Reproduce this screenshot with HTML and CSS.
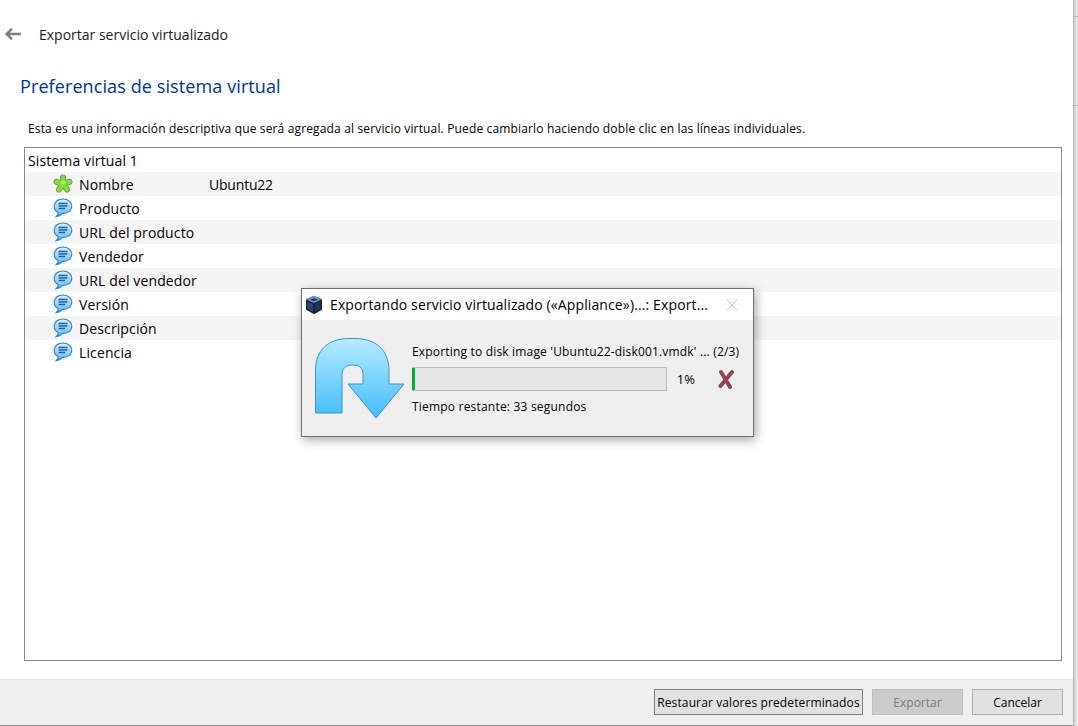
FILE: index.html
```html
<!DOCTYPE html>
<html lang="es">
<head>
  <meta charset="UTF-8">
  <meta name="viewport" content="width=device-width, initial-scale=1.0">
  <link rel="stylesheet" href="styles.css">
  <title>Exportar servicio virtualizado</title>
</head>
<body>
<svg class="defs" width="0" height="0">
  <defs>
    <linearGradient id="bubbleFill" x1="0" y1="0" x2="0" y2="1">
      <stop offset="0" stop-color="#d8f1ff"/>
      <stop offset="1" stop-color="#5db8f2"/>
    </linearGradient>
    <linearGradient id="arrowFill" x1="0" y1="0" x2="0" y2="1">
      <stop offset="0" stop-color="#b5ebff"/>
      <stop offset="1" stop-color="#42bdfb"/>
    </linearGradient>
    <symbol id="bubble" viewBox="0 0 20 20">
      <path d="M10 1C4.900 1 1.200 4 1.200 8.300c0 3 1.800 5.300 4.400 6.500-.2 1.400-1 2.700-2.400 3.900 2.600-.2 4.700-1.400 6.300-3.300h.8c5.100 0 8.500-3 8.500-7.100S15.100 1 10 1z" fill="url(#bubbleFill)" stroke="#2a84d8" stroke-width="1.200"/>
      <path d="M5.500 5.500h9M5.500 8h9M5.500 10.500h6.500" stroke="#1f5fa8" stroke-width="1.400" fill="none"/>
    </symbol>
  </defs>
</svg>

<div class="window">
  <div class="main">
    <!-- Cabecera -->
    <div class="top-bar">
      <svg class="back-icon" width="16" height="12" viewBox="0 0 16 12">
        <path d="M16 6H2M7 .8L1.600 6 7 11.200" fill="none" stroke="#808080" stroke-width="2.600"/>
      </svg>
      <span class="top-title">Exportar servicio virtualizado</span>
    </div>

    <h1 class="page-title">Preferencias de sistema virtual</h1>
    <p class="hint">Esta es una información descriptiva que será agregada al servicio virtual. Puede cambiarlo haciendo doble clic en las líneas individuales.</p>

    <!-- Arbol de propiedades -->
    <div class="tree">
      <div class="tree-root">Sistema virtual 1</div>
      <div class="tree-row alt">
        <svg class="row-icon" width="20" height="20" viewBox="0 0 20 20">
          <path d="M10 10V3.500M10 10l6.500-2.100M10 10l4 5.500M10 10l-4 5.500M10 10L3.500 7.900" stroke="#5aa82c" stroke-width="6" stroke-linecap="round" fill="none"/>
          <path d="M10 10V3.500M10 10l6.500-2.100M10 10l4 5.500M10 10l-4 5.500M10 10L3.500 7.900" stroke="#86d943" stroke-width="4.400" stroke-linecap="round" fill="none"/>
          <circle cx="10" cy="8.500" r="2.200" fill="#aee875"/>
        </svg>
        <span class="row-name">Nombre</span><span class="row-value">Ubuntu22</span>
      </div>
      <div class="tree-row">
        <svg class="row-icon" width="20" height="20"><use href="#bubble"/></svg>
        <span class="row-name">Producto</span>
      </div>
      <div class="tree-row alt">
        <svg class="row-icon" width="20" height="20"><use href="#bubble"/></svg>
        <span class="row-name">URL del producto</span>
      </div>
      <div class="tree-row">
        <svg class="row-icon" width="20" height="20"><use href="#bubble"/></svg>
        <span class="row-name">Vendedor</span>
      </div>
      <div class="tree-row alt">
        <svg class="row-icon" width="20" height="20"><use href="#bubble"/></svg>
        <span class="row-name">URL del vendedor</span>
      </div>
      <div class="tree-row">
        <svg class="row-icon" width="20" height="20"><use href="#bubble"/></svg>
        <span class="row-name">Versión</span>
      </div>
      <div class="tree-row alt">
        <svg class="row-icon" width="20" height="20"><use href="#bubble"/></svg>
        <span class="row-name">Descripción</span>
      </div>
      <div class="tree-row">
        <svg class="row-icon" width="20" height="20"><use href="#bubble"/></svg>
        <span class="row-name">Licencia</span>
      </div>
    </div>

    <!-- Botones -->
    <div class="button-bar">
      <button class="btn btn-wide">Restaurar valores predeterminados</button>
      <button class="btn btn-disabled">Exportar</button>
      <button class="btn">Cancelar</button>
    </div>
  </div>
  <div class="side-strip">
    <div class="strip-seg strip-a"></div>
    <div class="strip-seg strip-b"></div>
    <div class="strip-seg"></div>
  </div>
</div>

<!-- Dialogo de progreso -->
<div class="dialog">
  <div class="dialog-title">
    <svg class="vbox-icon" width="18" height="20" viewBox="0 0 18 20">
      <path d="M9 .8l8 3.400v10.600L9 19.200 1 14.800V4.200z" fill="#16263f"/>
      <path d="M9 .8l8 3.400L9 8 1 4.200z" fill="#6f97c2"/>
      <path d="M9 3.200l3.800 1.400L9 6.300 5.200 4.600z" fill="#1d3353"/>
      <path d="M2.500 6.500L8 9.200v7.600l-5.500-3z" fill="#2a466f"/>
      <path d="M15.500 6.500L10 9.200v7.600l5.500-3z" fill="#1f3557"/>
    </svg>
    <span class="dialog-caption">Exportando servicio virtualizado («Appliance»)...: Export...</span>
    <svg class="dialog-close" width="12" height="12" viewBox="0 0 12 12">
      <path d="M.5.500l11 11M11.500.500l-11 11" stroke="#c4c4c4" stroke-width="1" fill="none"/>
    </svg>
  </div>
  <div class="dialog-body">
    <svg class="uturn-icon" width="90" height="82" viewBox="0 0 90 82">
      <path d="M.5 75V32C.5 12 14 .5 33 .5h8C60 .5 74 12 74 32v14h15L61 80 33 46h15V36c0-6-4-9-10-9-7 0-11 3-11 10v38z" fill="url(#arrowFill)" stroke="#3f8fdc" stroke-width="1"/>
    </svg>
    <div class="progress-info">
      <div class="progress-label">Exporting to disk image 'Ubuntu22-disk001.vmdk' ... (2/3)</div>
      <div class="progress-row">
        <div class="progress-track"><div class="progress-fill" style="width: 1%"></div></div>
        <span class="progress-pct">1%</span>
        <svg class="cancel-icon" width="18" height="20" viewBox="0 0 18 20">
          <path d="M4 3l9 15M15 3L3.500 17" stroke="#6b5a5c" stroke-width="4" stroke-linecap="round" fill="none"/>
          <path d="M4 3l9 15M15 3L3.500 17" stroke="#a83c4c" stroke-width="2.600" stroke-linecap="round" fill="none"/>
        </svg>
      </div>
      <div class="progress-time">Tiempo restante: 33 segundos</div>
    </div>
  </div>
</div>
</body>
</html>
```

FILE: styles.css
```css
body {
  margin: 0;
  width: 1078px;
  height: 726px;
  overflow: hidden;
  background-color: #fff;
  color: #000;
  font-family: "Open Sans", "Noto Sans", sans-serif;
  font-size: 12px;
  position: relative;
}

.defs {
  position: absolute;
}

.window {
  display: flex;
  height: 726px;
}

.main {
  flex: 1;
  display: flex;
  flex-direction: column;
  min-width: 0;
}

.top-bar {
  display: flex;
  align-items: center;
  height: 24px;
  margin-top: 22px;
  padding-left: 5px;
}

.back-icon {
  margin-right: 18px;
}

.top-title {
  font-size: 14px;
  color: #1a1a1a;
}

.page-title {
  margin: 25px 0 0 20px;
  height: 30px;
  line-height: 30px;
  font-size: 18px;
  font-weight: 400;
  letter-spacing: 0.1px;
  color: #003399;
}

.hint {
  margin: 19px 0 0 28px;
  height: 17px;
  line-height: 17px;
  font-size: 12px;
  letter-spacing: 0.15px;
}

.tree {
  margin: 10px 11px 0 24px;
  height: 511px;
  border: 1px solid #828790;
  padding-top: 1px;
  font-size: 14px;
  flex: none;
}

.tree-root {
  height: 23px;
  line-height: 23px;
  padding-left: 3px;
  letter-spacing: 0.12px;
}

.tree-row {
  display: flex;
  align-items: center;
  height: 24px;
  padding-left: 28px;
}

.tree-row.alt {
  background-color: #f5f5f5;
}

.row-icon {
  flex: none;
  margin-right: 6px;
}

.row-name {
  width: 130px;
  letter-spacing: 0.12px;
}

.row-value {
  letter-spacing: -0.2px;
}

.button-bar {
  margin-top: 18px;
  flex: 1;
  display: flex;
  justify-content: flex-end;
  gap: 9px;
  padding: 9px 10px 0 0;
  background-color: #efefef;
  border-top: 1px solid #e2e2e2;
  border-bottom: 1px solid #8f8f8f;
  box-sizing: border-box;
}

.btn {
  width: 91px;
  height: 26px;
  padding: 0;
  font-family: inherit;
  font-size: 12px;
  color: #000;
  background-color: #e1e1e1;
  border: 1px solid #adadad;
}

.btn-wide {
  width: 209px;
  border-color: #7f7f7f;
  letter-spacing: 0.12px;
}

.btn-disabled {
  background-color: #cccccc;
  border-color: #bfbfbf;
  color: #7a7a7a;
}

.side-strip {
  flex: none;
  width: 5px;
  display: flex;
  flex-direction: column;
}

.strip-seg {
  flex: 1;
  background: linear-gradient(to right, #a9a9a9, #dcdcdc 40%, #e6e6e6);
}

.strip-a {
  flex: none;
  height: 16px;
  border-bottom: 1px solid #b5b5b5;
}

.strip-b {
  flex: none;
  height: 88px;
  border-bottom: 1px solid #b5b5b5;
}

/* Dialogo sobre la ventana */
.dialog {
  position: absolute;
  left: 301px;
  top: 288px;
  width: 451px;
  height: 147px;
  border: 1px solid #6f6f6f;
  background-color: #efefef;
  box-shadow: 2px 3px 10px rgba(0, 0, 0, 0.35);
}

.dialog-title {
  display: flex;
  align-items: center;
  height: 31px;
  background-color: #fff;
  padding-left: 3px;
}

.vbox-icon {
  flex: none;
  margin-right: 7px;
}

.dialog-caption {
  font-size: 14px;
  letter-spacing: 0.12px;
  white-space: nowrap;
  width: 394px;
  overflow: hidden;
}

.dialog-close {
  flex: none;
  margin-left: 2px;
}

.dialog-body {
  display: flex;
  padding: 18px 0 0 13px;
}

.uturn-icon {
  flex: none;
  margin-right: 7px;
}

.progress-info {
  width: 340px;
  padding-top: 5px;
}

.progress-label {
  height: 17px;
  line-height: 17px;
  font-size: 12px;
  letter-spacing: 0.18px;
  white-space: nowrap;
}

.progress-row {
  display: flex;
  align-items: center;
  margin-top: 7px;
}

.progress-track {
  flex: none;
  box-sizing: border-box;
  width: 255px;
  height: 24px;
  border: 1px solid #bcbcbc;
  background-color: #e6e6e6;
}

.progress-fill {
  min-width: 2px;
  height: 100%;
  margin-left: -1px;
  background-color: #06b025;
}

.progress-pct {
  width: 42px;
  font-size: 13px;
  text-align: right;
  padding-right: 14px;
  box-sizing: border-box;
}

.cancel-icon {
  flex: none;
  margin-left: 8px;
}

.progress-time {
  margin-top: 7px;
  height: 17px;
  line-height: 17px;
  letter-spacing: 0.2px;
}
```
